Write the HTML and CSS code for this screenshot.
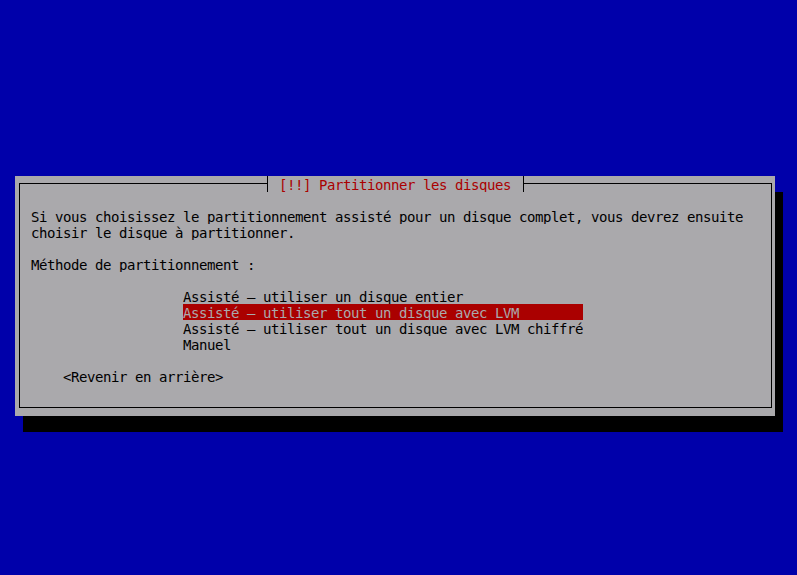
FILE: index.html
```html
<!DOCTYPE html>
<html lang="fr">
  <head>
  <meta charset="utf-8">
  <meta name="viewport" content="width=device-width, initial-scale=1">
  <title>Partitionner les disques</title>
  <link rel="stylesheet" href="styles.css">
  </head>
  <body>
    <div class="dialog">
      <div class="frame">
        <div class="title">[!!] Partitionner les disques</div>
        <p class="line">Si vous choisissez le partitionnement assisté pour un disque complet, vous devrez ensuite</p>
        <p class="line">choisir le disque à partitionner.</p>
        <p class="line blank"></p>
        <p class="line">Méthode de partitionnement :</p>
        <p class="line blank"></p>
        <ul class="menu">
          <li class="line">Assisté – utiliser un disque entier</li>
          <li class="line selected">Assisté – utiliser tout un disque avec LVM</li>
          <li class="line">Assisté – utiliser tout un disque avec LVM chiffré</li>
          <li class="line">Manuel</li>
        </ul>
        <p class="line blank"></p>
        <p class="line back">&lt;Revenir en arrière&gt;</p>
      </div>
    </div>
  </body>
</html>
```

FILE: styles.css
```css
* {
  margin: 0;
  padding: 0;
  box-sizing: border-box;
}

body {
  background: #0000aa;
  font-family: 'DejaVu Sans Mono', 'Liberation Mono', monospace;
  font-size: 14px;
  letter-spacing: -0.43px;
  color: #000;
  width: 797px;
  height: 575px;
  overflow: hidden;
  padding: 176px 0 0 15px;
}

.dialog {
  width: 760px;
  height: 240px;
  background: #aaa9ac;
  box-shadow: 8px 16px 0 #000;
  padding: 7px 3px 8px 4px;
}

.frame {
  position: relative;
  height: 225px;
  border: 1px solid #000;
  padding: 24px 0 0 11px;
}

.title {
  position: absolute;
  top: -8px;
  left: 247px;
  height: 16px;
  line-height: 16px;
  padding: 1px 11px 0 11px;
  width: 257px;
  background: #aaa9ac;
  border-left: 1px solid #000;
  border-right: 1px solid #000;
  color: #aa0000;
  white-space: pre;
  overflow: hidden;
}

/* one row of the 8x16 text grid */
.line {
  height: 16px;
  line-height: 16px;
  padding-top: 1px;
  overflow: hidden;
  white-space: pre;
}

.menu {
  list-style: none;
  margin-left: 152px;
  width: 400px;
}

.selected {
  background: #aa0000;
  color: #aaa9ac;
}

.back {
  margin-left: 32px;
}
```
